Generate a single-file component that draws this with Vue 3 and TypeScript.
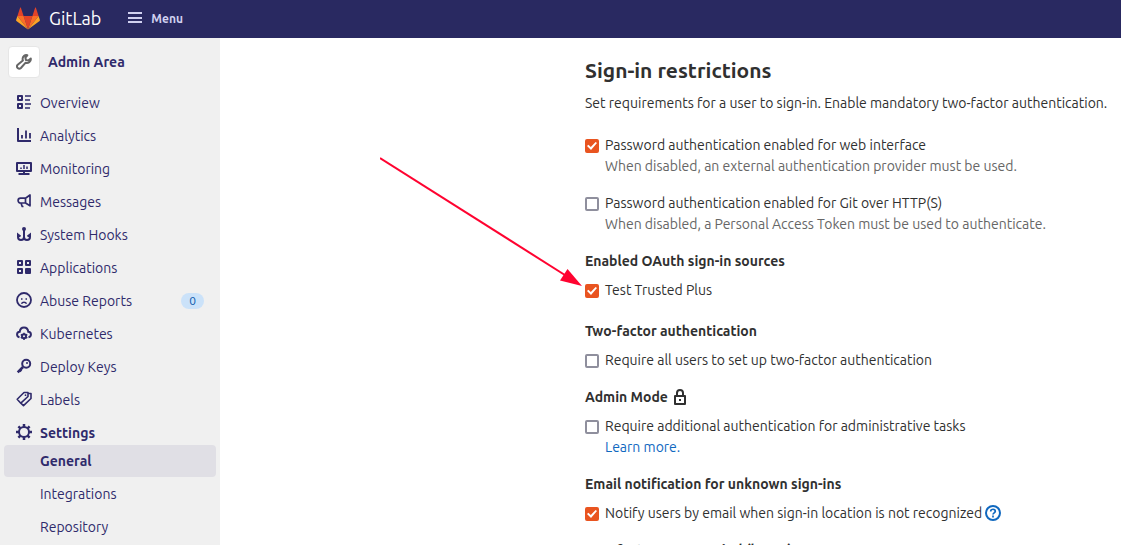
<script setup lang="ts">
import { ref } from 'vue'

interface NavItem {
  label: string
  icon: string
  count?: number
  active?: boolean
}

const navItems: NavItem[] = [
  { label: 'Overview', icon: 'overview' },
  { label: 'Analytics', icon: 'chart' },
  { label: 'Monitoring', icon: 'monitor' },
  { label: 'Messages', icon: 'messages' },
  { label: 'System Hooks', icon: 'hook' },
  { label: 'Applications', icon: 'applications' },
  { label: 'Abuse Reports', icon: 'abuse', count: 0 },
  { label: 'Kubernetes', icon: 'cloud' },
  { label: 'Deploy Keys', icon: 'key' },
  { label: 'Labels', icon: 'labels' },
  { label: 'Settings', icon: 'settings', active: true },
]

const subItems: NavItem[] = [
  { label: 'General', icon: '', active: true },
  { label: 'Integrations', icon: '' },
  { label: 'Repository', icon: '' },
]

const passwordWeb = ref(true)
const passwordGit = ref(false)
const oauthPlus = ref(true)
const requireTwoFactor = ref(false)
const adminMode = ref(false)
const notifyUnknown = ref(true)
</script>

<template>
  <div class="page">
    <header class="topbar">
      <a class="brand" href="#">
        <svg class="tanuki" viewBox="0 0 24 23" aria-hidden="true">
          <path fill="#e24329" d="M12 22.5 16.4 9H7.6z" />
          <path fill="#fc6d26" d="M12 22.5 7.6 9H1.4zM12 22.5 16.4 9h6.2z" />
          <path fill="#fca326" d="M1.4 9 .1 13.1c-.1.4 0 .8.3 1L12 22.5zM22.6 9l1.3 4.1c.1.4 0 .8-.3 1L12 22.5z" />
          <path fill="#e24329" d="M1.4 9h6.2L4.9.8c-.1-.4-.7-.4-.8 0zM22.6 9h-6.2L19.1.8c.1-.4.7-.4.8 0z" />
        </svg>
        <span class="wordmark">GitLab</span>
      </a>
      <button class="menu" type="button">
        <svg class="burger" viewBox="0 0 16 16" aria-hidden="true">
          <path d="M1 3h14M1 8h14M1 12h14" stroke="currentColor" stroke-width="2" />
        </svg>
        Menu
      </button>
    </header>

    <div class="body">
      <nav class="sidebar" aria-label="Admin navigation">
        <a class="context" href="#">
          <span class="avatar">
            <svg class="icon" viewBox="0 0 16 16" fill="none" stroke="currentColor" stroke-width="2" stroke-linejoin="round" aria-hidden="true">
              <path d="M11.3 1.3C9 .6 6.500 2.300 6.600 5c0 .5.1 1 .3 1.500L1.700 10.800a2.200 2.200 0 1 0 3.200 3.200l4.500-5.200c2.800 1 5.800-1 5.400-4.200L12.300 6.600 9.900 6 9.400 3.700z" />
            </svg>
          </span>
          <span>Admin Area</span>
        </a>

        <ul class="nav">
          <li v-for="item in navItems" :key="item.label">
            <a class="nav-link" :class="{ strong: item.active }" href="#">
              <svg class="icon" viewBox="0 0 16 16" fill="none" stroke="currentColor" stroke-width="2" aria-hidden="true">
                <template v-if="item.icon === 'overview'">
                  <path d="M2 2h4v4H2zM2 10h4v4H2z" stroke-linejoin="round" />
                  <path d="M9 2h6M9 6h5M9 10h6M9 14h5" stroke-width="1.600" />
                </template>
                <template v-else-if="item.icon === 'chart'">
                  <path d="M2 1v13h13" stroke-linejoin="round" />
                  <path d="M6 8v3.500M10 3.500v8M14 6v5.500" stroke-width="1.800" />
                </template>
                <template v-else-if="item.icon === 'monitor'">
                  <path d="M1 3h14v8H1zM8 11v3M2.500 14h11" stroke-linejoin="round" />
                  <path d="M5 7.500V9M8 5v4M11 6.500V9" stroke-width="1.500" />
                </template>
                <template v-else-if="item.icon === 'messages'">
                  <path d="M14 2v10.800L9.500 10H4.500a2.400 2.400 0 0 1 0-4.800h5zM9.500 5v5M5 10l1.200 3.500h1.300" stroke-width="1.700" stroke-linejoin="round" />
                </template>
                <template v-else-if="item.icon === 'hook'">
                  <circle cx="8" cy="3" r="1" />
                  <path d="M8 4v7c0 4-6 4-6 0V8.500l2.500 2M8 11c0 4 6 4 6 0V8.500l-2.500 2" />
                </template>
                <template v-else-if="item.icon === 'applications'">
                  <path d="M2 2h4v4H2zM10 2h4v4h-4zM2 10h4v4H2z" stroke-linejoin="round" />
                  <rect x="9" y="9" width="6" height="6" rx="1" fill="currentColor" stroke="none" />
                </template>
                <template v-else-if="item.icon === 'abuse'">
                  <circle cx="8" cy="8" r="7" stroke-width="1.800" />
                  <path d="M5.500 11.700c.8-2 4.200-2 5 0" stroke-width="1.500" />
                  <path d="M5 7h1.500M9.500 7H11" stroke-width="1.600" />
                </template>
                <template v-else-if="item.icon === 'cloud'">
                  <path d="M3.500 12.200C.2 11.500.3 7 3.700 6.800 4.300.9 11.700.9 12.300 6.800c3.400.2 3.500 4.700.2 5.400" />
                  <circle cx="8" cy="11.200" r="2" />
                  <path d="M8 7.700v1.500M8 13.200v1.700M4.800 9.500l1.500.7M9.700 12.200l1.600.8M4.800 13l1.500-.8M9.700 10.200l1.600-.7" stroke-width="1.500" />
                </template>
                <template v-else-if="item.icon === 'key'">
                  <circle cx="10.200" cy="5.800" r="4" />
                  <path d="M7 9l-5.300 5.300M4 12l1.300 1.300" stroke-width="2.600" />
                  <circle cx="11" cy="5" r="1" fill="currentColor" stroke="none" />
                </template>
                <template v-else-if="item.icon === 'labels'">
                  <path d="M1.200 8.200 8 1.500h4v4L4.800 12.200zM4.800 12.200l2.700 2.500L15 7.500V2.500h-3" stroke-width="1.600" stroke-linejoin="round" />
                  <circle cx="9.500" cy="4.200" r="0.900" fill="currentColor" stroke="none" />
                </template>
                <template v-else>
                  <circle cx="8" cy="8" r="5" />
                  <path d="M8 0v3M8 13v3M0 8h3M13 8h3M2.400 2.400l2 2M11.600 11.600l2 2M2.400 13.600l2-2M11.600 4.400l2-2" stroke-width="2.500" />
                </template>
              </svg>
              <span class="nav-label">{{ item.label }}</span>
              <span v-if="item.count !== undefined" class="badge">{{ item.count }}</span>
            </a>
          </li>
        </ul>
        <ul class="subnav">
          <li v-for="item in subItems" :key="item.label">
            <a class="sub-link" :class="{ strong: item.active, current: item.active }" href="#">{{ item.label }}</a>
          </li>
        </ul>
      </nav>

      <main class="main">
        <section class="settings">
          <h1>Sign-in restrictions</h1>
          <p class="intro">Set requirements for a user to sign-in. Enable mandatory two-factor authentication.</p>

          <div class="option">
            <input id="password-web" v-model="passwordWeb" type="checkbox" />
            <div>
              <label for="password-web">Password authentication enabled for web interface</label>
              <p class="hint">When disabled, an external authentication provider must be used.</p>
            </div>
          </div>
          <div class="option">
            <input id="password-git" v-model="passwordGit" type="checkbox" />
            <div>
              <label for="password-git">Password authentication enabled for Git over HTTP(S)</label>
              <p class="hint">When disabled, a Personal Access Token must be used to authenticate.</p>
            </div>
          </div>

          <h2>Enabled OAuth sign-in sources</h2>
          <div class="option sources">
            <input id="oauth-plus" v-model="oauthPlus" type="checkbox" />
            <label for="oauth-plus">Test Trusted Plus</label>
          </div>

          <h2>Two-factor authentication</h2>
          <div class="option">
            <input id="two-factor" v-model="requireTwoFactor" type="checkbox" />
            <label for="two-factor">Require all users to set up two-factor authentication</label>
          </div>

          <h2>
            Admin Mode
            <svg class="icon" viewBox="0 0 16 16" fill="none" stroke="currentColor" stroke-width="2" aria-hidden="true">
              <path d="M3 7h10v8H3zM5 7V4a3 3 0 0 1 6 0v3" stroke-linejoin="round" />
              <path d="M7 11h2" />
            </svg>
          </h2>
          <div class="option">
            <input id="admin-mode" v-model="adminMode" type="checkbox" />
            <div>
              <label for="admin-mode">Require additional authentication for administrative tasks</label>
              <p class="hint"><a href="#">Learn more.</a></p>
            </div>
          </div>

          <h2>Email notification for unknown sign-ins</h2>
          <div class="option">
            <input id="notify-unknown" v-model="notifyUnknown" type="checkbox" />
            <label for="notify-unknown">Notify users by email when sign-in location is not recognized</label>
            <a class="help" href="#" aria-label="Help">
              <svg class="icon" viewBox="0 0 16 16" fill="none" stroke="currentColor" stroke-width="2" aria-hidden="true">
                <circle cx="8" cy="8" r="7" />
                <path d="M5.700 6.500C5.700 3.500 10.300 3.600 10.300 6.300 10.300 7.800 8 7.900 8 9.500M8 10.600v1.900" stroke-width="1.700" />
              </svg>
            </a>
          </div>

          <h2>Two-factor grace period (hours)</h2>
        </section>
      </main>
    </div>

    <svg class="pointer" viewBox="0 0 204 132" aria-hidden="true">
      <path d="M0 1 188 120" stroke="#ff0330" stroke-width="2" />
      <path d="M202 129 187.500 112 180 123.500z" fill="#ff0330" />
    </svg>
  </div>
</template>

<style>
body {
  margin: 0;
}
</style>

<style scoped>
* {
  box-sizing: border-box;
}

.page {
  display: flex;
  flex-direction: column;
  position: relative;
  height: 100vh;
  overflow: hidden;
  background: #fff;
  color: #303030;
  font-family: Ubuntu, "Noto Sans", sans-serif;
  font-size: 14px;
  line-height: 21px;
}

a {
  color: #1068bf;
  text-decoration: none;
}

.icon {
  display: block;
  flex: none;
  width: 16px;
  height: 16px;
}

.topbar {
  display: flex;
  flex: none;
  align-items: center;
  gap: 26px;
  height: 38px;
  padding: 0 16px 2px;
  background: #292961;
}

.brand {
  display: flex;
  align-items: center;
  gap: 9px;
  color: #fff;
}

.tanuki {
  width: 24px;
  height: 23px;
}

.wordmark {
  font-size: 18px;
}

.menu {
  display: flex;
  align-items: center;
  gap: 8px;
  padding: 0;
  border: 0;
  background: none;
  color: #d1d1f0;
  font: inherit;
  font-size: 12px;
  font-weight: 700;
}

.burger {
  width: 16px;
  height: 16px;
}

.body {
  display: flex;
  flex: 1;
  min-height: 0;
}

.sidebar {
  flex: none;
  width: 220px;
  padding-top: 8px;
  overflow: hidden;
  background: #f0f0f0;
}

.sidebar a {
  color: #2f2a6b;
}

.context {
  display: flex;
  align-items: center;
  gap: 8px;
  height: 32px;
  padding-left: 8px;
  font-weight: 700;
  line-height: 22px;
}

.avatar {
  display: grid;
  place-items: center;
  width: 32px;
  height: 32px;
  border: 1px solid #e6e6e6;
  border-radius: 4px;
  background: #fff;
  color: #666;
}

.nav,
.subnav {
  display: flex;
  flex-direction: column;
  margin: 0;
  padding: 0;
  list-style: none;
}

.nav {
  gap: 9px;
  padding-top: 13px;
}

.nav-link {
  display: flex;
  align-items: center;
  gap: 8px;
  height: 24px;
  padding: 0 16px;
}

.nav-link .icon,
h2 .icon {
  margin-bottom: 2px;
}

.nav-label {
  flex: 1;
}

.badge {
  padding: 0 8px;
  border-radius: 8px;
  background: #cbe2f9;
  color: #0b5cad;
  font-size: 12px;
  line-height: 16px;
}

.subnav {
  gap: 1px;
  padding: 0 4px;
}

.sub-link {
  display: flex;
  align-items: center;
  height: 32px;
  padding-left: 36px;
  border-radius: 4px;
  line-height: 22px;
}

.strong {
  font-weight: 700;
}

.current {
  background: #e0dfe5;
}

.main {
  flex: 1;
  min-width: 0;
  padding: 20px 0 0 365px;
  overflow: hidden;
}

h1 {
  margin: 0;
  font-size: 21px;
  line-height: 24px;
}

h2 {
  display: flex;
  align-items: center;
  gap: 4px;
  margin: 16px 0 8px;
  font-size: 14px;
  line-height: 21px;
}

.intro {
  margin: 11px 0 21px;
  white-space: nowrap;
}

.option {
  display: flex;
  align-items: flex-start;
  white-space: nowrap;
}

.option + .option {
  margin-top: 16px;
}

.sources {
  margin-bottom: 20px;
}

.hint {
  margin: 0;
  color: #666;
}

label {
  display: block;
}

input {
  display: grid;
  flex: none;
  place-items: center;
  appearance: none;
  width: 14px;
  height: 14px;
  margin: 4px 6px 0 0;
  border: 2px solid #8f8f9d;
  border-radius: 2px;
  background: #fff;
}

input:checked {
  border-color: #e95420;
  background: #e95420;
}

input:checked::after {
  content: "";
  width: 10px;
  height: 8px;
  background: #fff;
  clip-path: polygon(0 50%, 14% 34%, 38% 62%, 86% 0, 100% 14%, 40% 100%);
}

.help {
  margin: 2px 0 0 3px;
}

.pointer {
  position: absolute;
  top: 157px;
  left: 380px;
  width: 204px;
  height: 132px;
  pointer-events: none;
}
</style>
